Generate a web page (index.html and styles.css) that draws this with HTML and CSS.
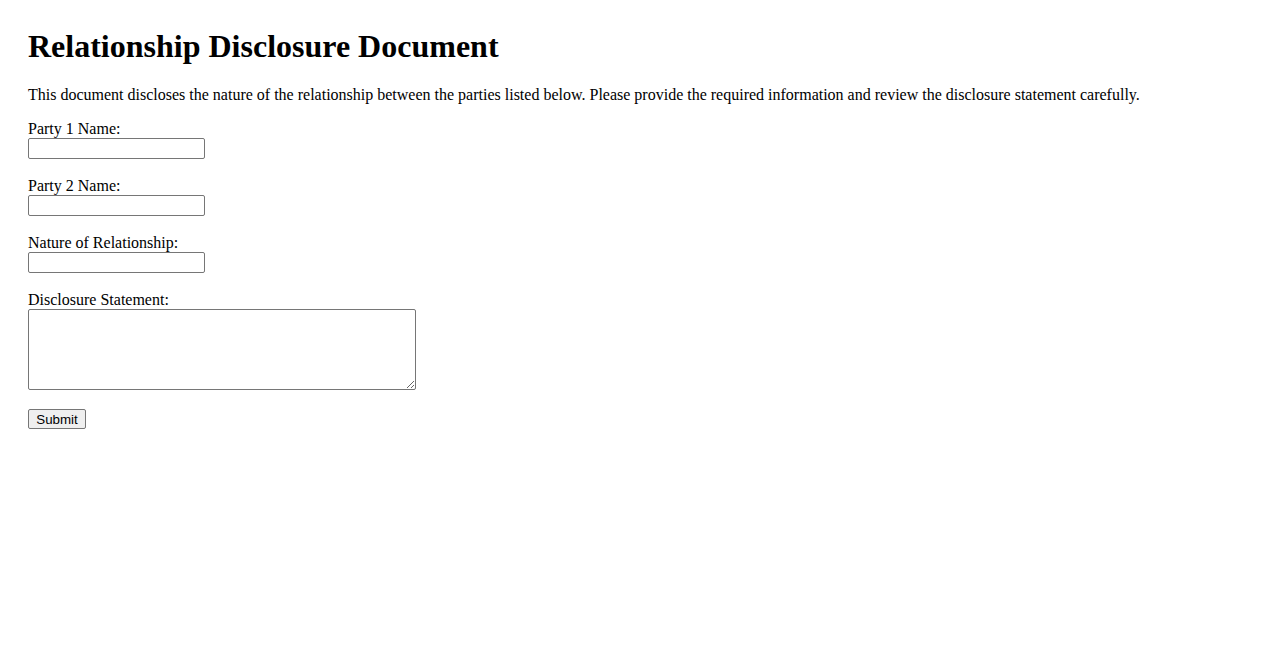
FILE: index.html
```html
<!DOCTYPE html>
<html lang="en">

<head>
    <meta charset="UTF-8">
    <meta name="viewport" content="width=device-width, initial-scale=1.0">
    <title>Relationship Disclosure Document</title>
    <link rel="stylesheet" href="styles.css">
</head>

<body>
    <h1>Relationship Disclosure Document</h1>
    <p>This document discloses the nature of the relationship between the parties listed below. Please provide the required information and review the disclosure statement carefully.</p>

    <form class="disclosure-form">
        <div class="field">
            <label for="party1">Party 1 Name:</label>
            <input type="text" id="party1" name="party1">
        </div>
        <div class="field">
            <label for="party2">Party 2 Name:</label>
            <input type="text" id="party2" name="party2">
        </div>
        <div class="field">
            <label for="relationship">Nature of Relationship:</label>
            <input type="text" id="relationship" name="relationship">
        </div>
        <div class="field field-statement">
            <label for="statement">Disclosure Statement:</label>
            <textarea id="statement" name="statement"></textarea>
        </div>
        <button type="submit">Submit</button>
    </form>
</body>

</html>
```

FILE: styles.css
```css
body {
    font-family: "Liberation Serif", "Times New Roman", serif;
    font-size: 16px;
    color: #000;
    background-color: #fff;
    margin: 8px;
    padding: 20px;
}

h1 {
    font-size: 32px;
    margin: 0 0 21px;
}

p {
    margin: 0 0 16px;
}

.field {
    margin-bottom: 18px;
}

.field-statement {
    margin-bottom: 15px;
}

.field label {
    display: block;
}

.field input {
    box-sizing: border-box;
    width: 177px;
    height: 21px;
    margin: 0;
    padding: 1px 2px;
    border: 1px solid #767676;
    border-radius: 2px;
    font-family: "Liberation Sans", Arial, sans-serif;
    font-size: 13.33px;
}

.field textarea {
    box-sizing: border-box;
    width: 388px;
    height: 81px;
    margin: 0;
    padding: 2px;
    border: 1px solid #767676;
    border-radius: 2px;
    font-family: "Liberation Mono", monospace;
    font-size: 13.33px;
}

button {
    box-sizing: border-box;
    width: 58px;
    height: 20px;
    margin: 0;
    padding: 1px 6px;
    border: 1px solid #767676;
    border-radius: 2px;
    background-color: #efefef;
    font-family: "Liberation Sans", Arial, sans-serif;
    font-size: 13.33px;
    color: #000;
}
```
